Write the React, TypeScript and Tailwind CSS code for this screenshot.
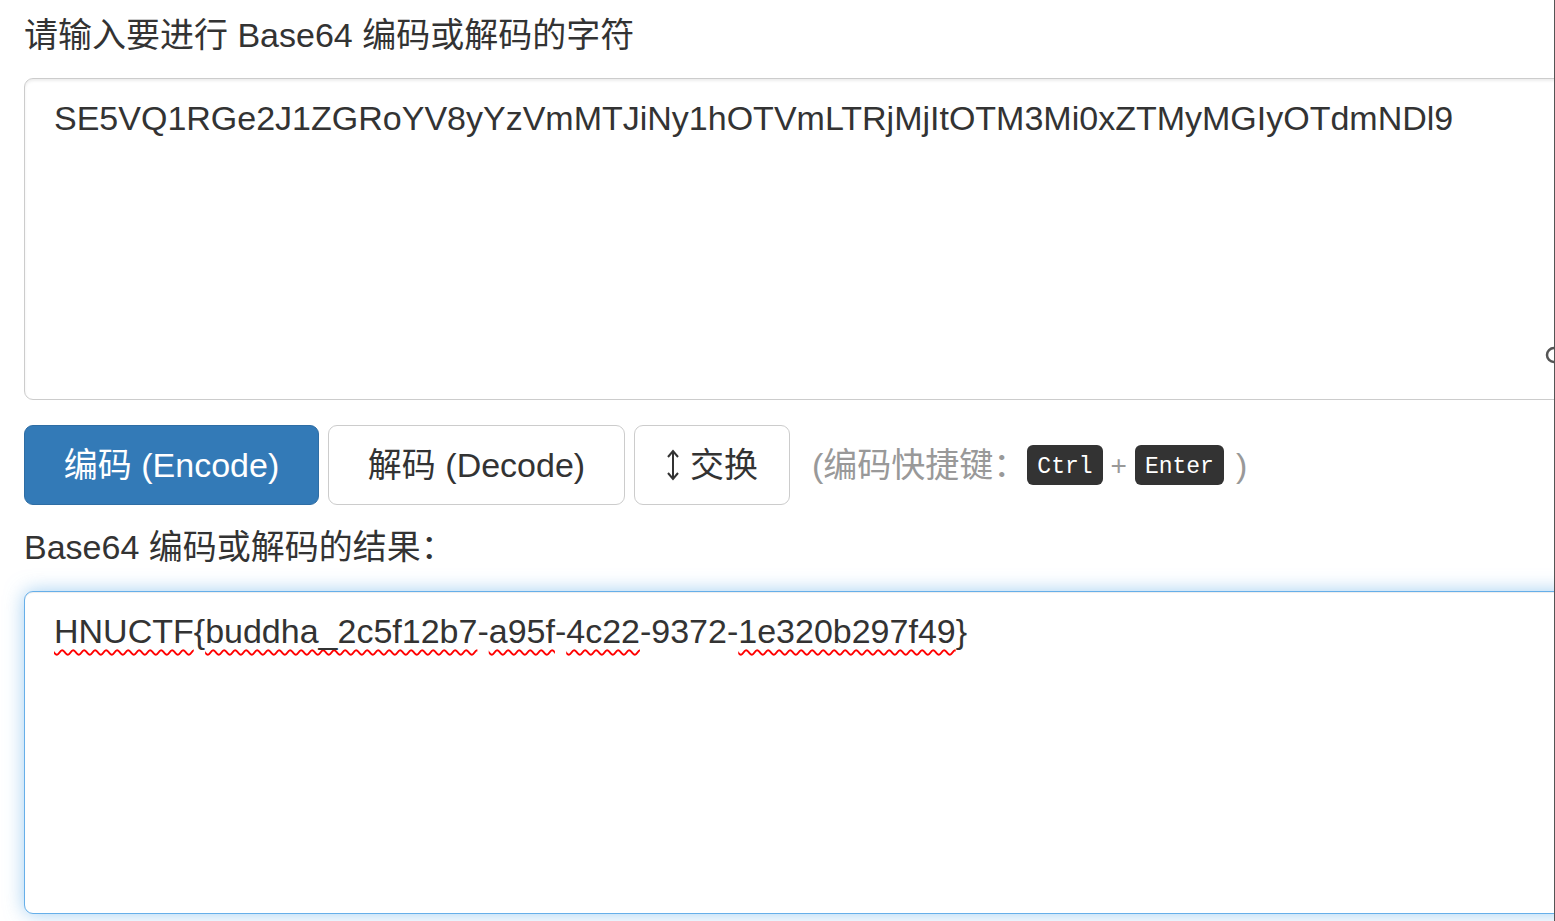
import React from 'react';

const sans = "font-['Liberation_Sans','Noto_Sans_CJK_SC',sans-serif]";
const mono = "font-['Liberation_Mono','DejaVu_Sans_Mono',monospace]";

const encoded = 'SE5VQ1RGe2J1ZGRoYV8yYzVmMTJiNy1hOTVmLTRjMjItOTM3Mi0xZTMyMGIyOTdmNDl9';

function Typo({ children }: { children: React.ReactNode }) {
  return (
    <span className="underline decoration-wavy decoration-[#f00] decoration-[2px] underline-offset-[6px]">
      {children}
    </span>
  );
}

function SortIcon() {
  return (
    <svg width="14" height="32" viewBox="0 0 14 32" className="shrink-0">
      <path d="M7 2 L7 30" stroke="#333" strokeWidth="2" fill="none" />
      <path d="M2 8 L7 2 L12 8" stroke="#333" strokeWidth="2" fill="none" />
      <path d="M2 24 L7 30 L12 24" stroke="#333" strokeWidth="2" fill="none" />
    </svg>
  );
}

export default function App() {
  return (
    <div className={`relative w-[1555px] h-[921px] overflow-hidden bg-white border-r border-[#555] text-[#333] ${sans} text-[34px] leading-[47px]`}>
      <div className="pl-[24px] pt-[12px]">
        <h4 className="mb-[19px]">请输入要进行 Base64 编码或解码的字符</h4>

        <div className="w-[1600px] h-[322px] border border-[#ccc] rounded-[9px] bg-white px-[29px] pt-[16px] shadow-[inset_0_2px_3px_rgba(0,0,0,0.075)] whitespace-nowrap">
          {encoded}
        </div>

        <div className="flex items-center gap-[9px] mt-[25px]">
          <button className="w-[295px] h-[80px] rounded-[9px] bg-[#337ab7] border border-[#2e6da4] text-white">
            编码 (Encode)
          </button>
          <button className="w-[297px] h-[80px] rounded-[9px] bg-white border border-[#ccc] text-[#333]">
            解码 (Decode)
          </button>
          <button className="w-[156px] h-[80px] rounded-[9px] bg-white border border-[#ccc] text-[#333] flex items-center justify-center gap-[10px]">
            <SortIcon />
            <span>交换</span>
          </button>
          <div className="flex items-center ml-[13px] text-[#999]">
            <span>(编码快捷键：</span>
            <kbd className={`inline-flex items-center h-[40px] px-[10px] pt-[4px] rounded-[6px] bg-[#333] text-white ${mono} text-[23px] leading-none`}>
              Ctrl
            </kbd>
            <span className="mx-[8px] text-[28px]">+</span>
            <kbd className={`inline-flex items-center h-[40px] px-[10px] pt-[4px] rounded-[6px] bg-[#333] text-white ${mono} text-[23px] leading-none`}>
              Enter
            </kbd>
            <span className="ml-[12px]">)</span>
          </div>
        </div>

        <h4 className="mt-[19px] mb-[20px]">Base64 编码或解码的结果：</h4>

        <div className="w-[1600px] h-[323px] border border-[#66afe9] rounded-[9px] bg-white px-[29px] pt-[16px] shadow-[inset_0_1px_1px_rgba(0,0,0,0.075),0_0_19px_rgba(102,175,233,0.6)] whitespace-nowrap">
          <Typo>HNUCTF</Typo>{'{'}<Typo>buddha_2c5f12b7</Typo>-<Typo>a95f</Typo>-<Typo>4c22</Typo>-9372-<Typo>1e320b297f49</Typo>{'}'}
        </div>
      </div>

      <svg width="12" height="18" viewBox="0 0 12 18" className="absolute left-[1544px] top-[346px]">
        <path d="M10 2 A7 7 0 1 0 10 16" stroke="#555" strokeWidth="2.5" fill="none" />
      </svg>
    </div>
  );
}
